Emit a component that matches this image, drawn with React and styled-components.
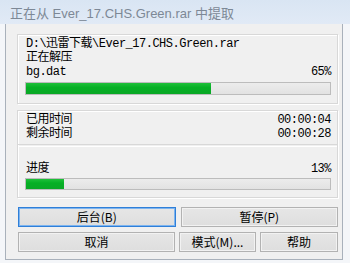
import React from "react";
import styled, { createGlobalStyle } from "styled-components";

const GlobalStyle = createGlobalStyle`
  html, body {
    margin: 0;
    padding: 0;
    background: #f4f6f9;
  }
  body {
    font-family: "Noto Sans", "Noto Sans CJK SC", sans-serif;
  }
`;

const Window = styled.div`
  width: 350px;
  height: 263px;
  overflow: hidden;
  background: #f4f6f9;
`;

const TitleBar = styled.div`
  height: 24px;
  display: flex;
  align-items: center;
  padding-left: 10px;
  background: linear-gradient(to bottom, #d9e5f3, #e1eaf6);
  color: #7d8896;
  font-family: "Liberation Sans", "Noto Sans CJK SC", sans-serif;
  font-size: 13px;
  white-space: nowrap;
`;

const Client = styled.div`
  box-sizing: border-box;
  margin-left: 5px;
  width: 338px;
  height: 236px;
  border: 1px solid #a9b1bb;
  border-top: none;
  background: #f0f0f0;
  padding: 10px 4px 0 11px;
  font-family: "Liberation Mono", "Noto Sans CJK SC", monospace;
  font-size: 12px;
  letter-spacing: -0.5px;
  color: #000;
`;

const GroupBox = styled.div`
  box-sizing: border-box;
  height: ${(p) => p.$h}px;
  margin-top: ${(p) => p.$mt || 0}px;
  border: 1px solid #d8d8d8;
  box-shadow: inset 1px 1px 0 #fff, 1px 1px 0 #fff;
  padding: ${(p) => p.$pad || "0"};
`;

const Section = styled.div`
  padding: ${(p) => p.$pad};
`;

const Line = styled.div`
  display: flex;
  justify-content: space-between;
  height: 14px;
  line-height: 14px;
  padding-left: 1px;
  white-space: nowrap;
`;

const Separator = styled.div`
  height: 1px;
  border-top: 1px solid #d8d8d8;
  border-bottom: 1px solid #fff;
  margin-top: ${(p) => p.$mt}px;
`;

const Track = styled.div`
  box-sizing: border-box;
  height: ${(p) => p.$h}px;
  margin-top: ${(p) => p.$mt}px;
  border: 1px solid #bcbcbc;
  background: linear-gradient(to bottom, #ececec, #e2e2e2);
`;

const Fill = styled.div`
  height: 100%;
  background: linear-gradient(to bottom, #1fc03a, #06b025 40%, #0aa826);
`;

const Buttons = styled.div`
  margin-top: 9px;
  padding-left: 1px;
  display: flex;
  flex-direction: column;
  gap: 5px;
`;

const ButtonRow = styled.div`
  display: grid;
  grid-template-columns: ${(p) => p.$cols};
  gap: ${(p) => p.$gap}px;
`;

const Button = styled.button`
  box-sizing: border-box;
  height: 20px;
  margin: 0;
  padding: 0;
  border: 1px solid ${(p) => (p.$focus ? "#2f7fd8" : "#b2b2b2")};
  box-shadow: ${(p) =>
    p.$focus ? "inset 0 0 0 1px #7db4ef" : "inset 0 0 0 1px #f2f2f2"};
  background: linear-gradient(to bottom, #e6e6e6, #dedede);
  font-family: "Noto Sans CJK SC", "Noto Sans", sans-serif;
  font-size: 12px;
  letter-spacing: 0;
  color: #000;
  line-height: 18px;
`;

const Progress = ({ value, h, mt }) => (
  <Track $h={h} $mt={mt}>
    <Fill style={{ width: `${value}%` }} />
  </Track>
);

export default function App() {
  return (
    <>
      <GlobalStyle />
      <Window>
        <TitleBar>正在从 Ever_17.CHS.Green.rar 中提取</TitleBar>
        <Client>
          <GroupBox $h={70} $pad="2px 6px 0 7px">
            <Line>D:\迅雷下载\Ever_17.CHS.Green.rar</Line>
            <Line>正在解压</Line>
            <Line>
              <span>bg.dat</span>
              <span>65%</span>
            </Line>
            <Progress value={61} h={13} mt={3} />
          </GroupBox>
          <GroupBox $h={88} $mt={6}>
            <Section $pad="2px 6px 0 7px">
              <Line>
                <span>已用时间</span>
                <span>00:00:04</span>
              </Line>
              <Line>
                <span>剩余时间</span>
                <span>00:00:28</span>
              </Line>
            </Section>
            <Separator $mt={3} />
            <Section $pad="15px 6px 0 7px">
              <Line>
                <span>进度</span>
                <span>13%</span>
              </Line>
              <Progress value={12.5} h={12} mt={2} />
            </Section>
          </GroupBox>
          <Buttons>
            <ButtonRow $cols="1fr 1fr" $gap={5}>
              <Button $focus>后台(B)</Button>
              <Button>暂停(P)</Button>
            </ButtonRow>
            <ButtonRow $cols="157px 77px 1fr" $gap={4}>
              <Button>取消</Button>
              <Button>模式(M)...</Button>
              <Button>帮助</Button>
            </ButtonRow>
          </Buttons>
        </Client>
      </Window>
    </>
  );
}
